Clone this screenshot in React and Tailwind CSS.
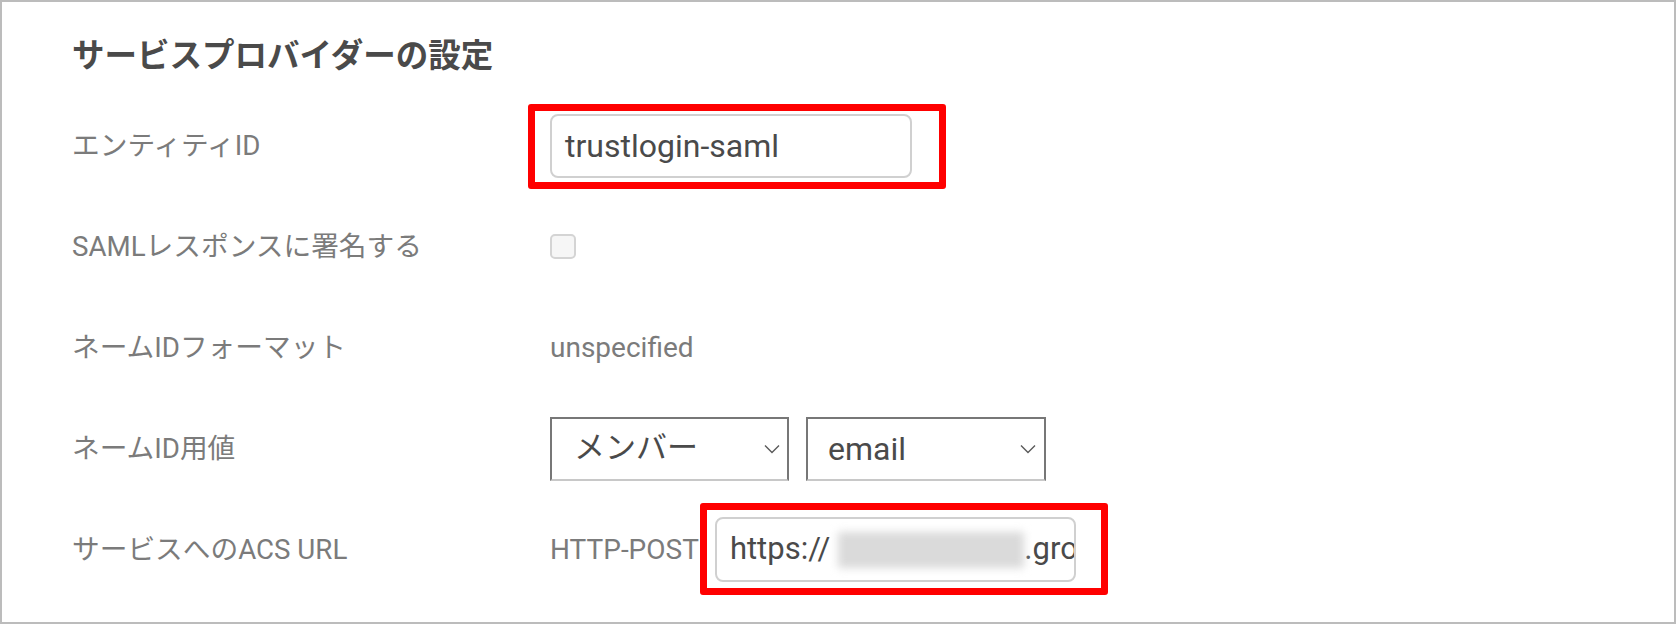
import React from "react";

function Chevron() {
  return (
    <svg width="16" height="10" viewBox="0 0 16 10" className="shrink-0">
      <polyline points="1,1.5 8,8.5 15,1.5" fill="none" stroke="#5a5a5a" strokeWidth="1.4" />
    </svg>
  );
}

function Row({ label, children }) {
  return (
    <div className="flex items-center h-[101px]">
      <div className="w-[548px] shrink-0 pl-[70px] text-[27.7px] leading-[36px] text-[#7b7b7b]">{label}</div>
      <div className="flex items-center">{children}</div>
    </div>
  );
}

export default function App() {
  return (
    <div className="w-[1676px] h-[624px] bg-white border-2 border-[#bcbcbc] overflow-hidden font-['Roboto','Noto_Sans_CJK_JP',sans-serif]">
      <div className="h-[93px] pt-[36px] pl-[70px]">
        <h2 className="text-[32.5px] leading-[36px] font-bold text-[#4a4a4a]">サービスプロバイダーの設定</h2>
      </div>

      <Row label="エンティティID">
        <div className="relative w-[362px] h-[64px]">
          <div className="w-full h-full flex items-center pl-[13px] border-2 border-[#d0d0d0] rounded-[8px] bg-white text-[32px] text-[#4a4a4a]">
            trustlogin-saml
          </div>
          <div className="absolute -left-[22px] -top-[10px] -right-[34px] -bottom-[11px] border-[7px] border-[#ff0000] rounded-[3px]"></div>
        </div>
      </Row>

      <Row label="SAMLレスポンスに署名する">
        <div className="w-[26px] h-[25px] rounded-[5px] border-2 border-[#d4d4d4] bg-[#f6f6f6]"></div>
      </Row>

      <Row label="ネームIDフォーマット">
        <span className="text-[28px] leading-[36px] text-[#7b7b7b]">unspecified</span>
      </Row>

      <Row label="ネームID用値">
        <div className="flex gap-[17px]">
          <div className="w-[239px] h-[64px] flex items-center justify-between pl-[22px] pr-[7px] border-2 border-[#777777] border-b-[#c8c8c8] text-[31px] text-[#4a4a4a]">
            <span>メンバー</span>
            <Chevron />
          </div>
          <div className="w-[240px] h-[64px] flex items-center justify-between pl-[20px] pr-[8px] border-2 border-[#777777] border-b-[#c8c8c8] text-[32px] text-[#4a4a4a]">
            <span>email</span>
            <Chevron />
          </div>
        </div>
      </Row>

      <Row label="サービスへのACS URL">
        <span className="text-[28px] leading-[36px] text-[#7b7b7b]">HTTP-POST</span>
        <div className="relative ml-[16px] w-[361px] h-[65px]">
          <div className="w-full h-full flex items-center pl-[13px] pr-[11px] border-2 border-[#d0d0d0] rounded-[8px] bg-white text-[31px] text-[#4a4a4a] overflow-hidden whitespace-nowrap">
            <span className="shrink-0">https://</span>
            <span className="shrink-0 ml-[8px] w-[186px] h-[36px] bg-[#dadada] blur-[4px]"></span>
            <span className="shrink-0">.gro</span>
          </div>
          <div className="absolute -left-[15px] -top-[14px] -right-[32px] -bottom-[13px] border-[7px] border-[#ff0000] rounded-[3px]"></div>
        </div>
      </Row>
    </div>
  );
}
